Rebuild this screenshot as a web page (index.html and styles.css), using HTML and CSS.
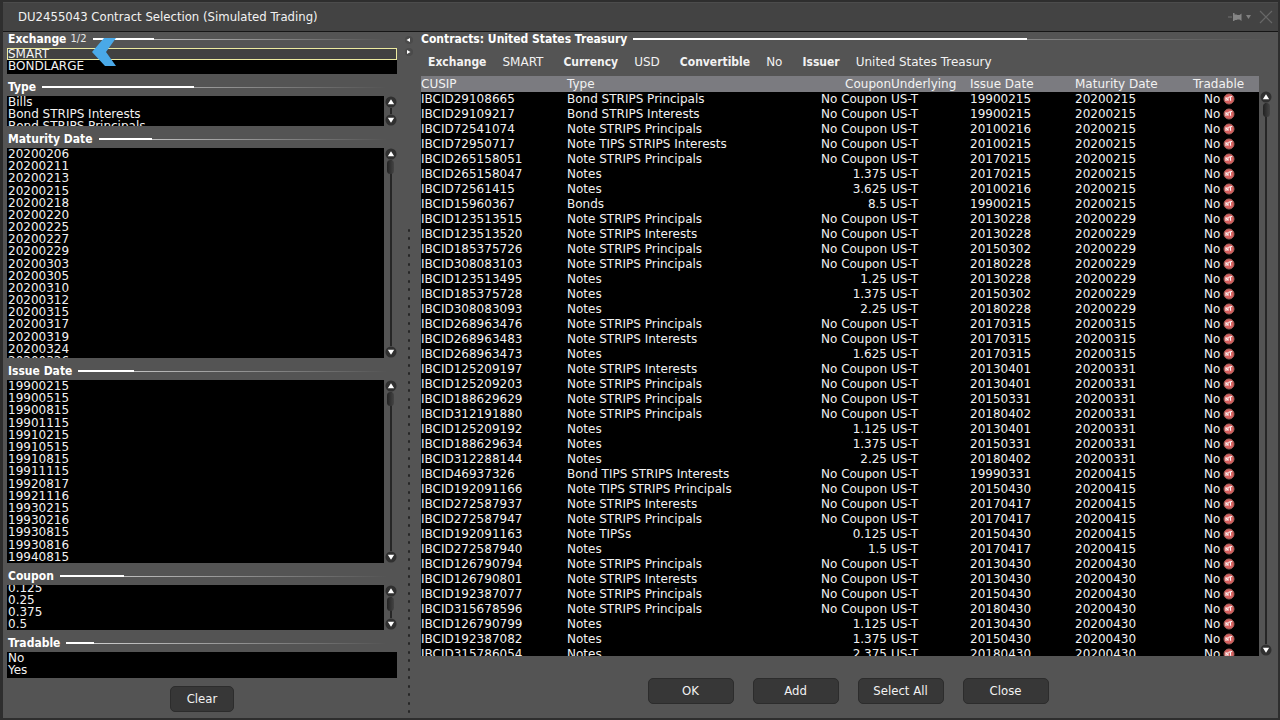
FILE: index.html
```html
<!DOCTYPE html>
<html lang="en">
<head>
<meta charset="utf-8">
<title>DU2455043 Contract Selection (Simulated Trading)</title>
<link rel="stylesheet" href="styles.css">
</head>
<body>
<svg class="defs" aria-hidden="true">
  <symbol id="up" viewBox="0 0 12 12"><circle cx="6" cy="6" r="5.5" fill="#303030"/><path d="M6 3.2 9.2 8.2H2.8z" fill="#fff"/></symbol>
  <symbol id="down" viewBox="0 0 12 12"><circle cx="6" cy="6" r="5.5" fill="#303030"/><path d="M6 8.8 9.2 3.8H2.8z" fill="#fff"/></symbol>
  <symbol id="nt" viewBox="0 0 12 12"><circle cx="6" cy="6" r="5" fill="#d9605f" stroke="#a8605c"/><path d="M3 8V4.500l2 3V4M5.500 4.200l3.700-.7M7.300 4l.4 3.800" fill="none" stroke="#fff" stroke-width="1"/></symbol>
</svg>
<div class="window">
  <header class="titlebar">
    <h1 class="title">DU2455043 Contract Selection (Simulated Trading)</h1>
    <button class="plain" aria-label="Pin"><svg width="26" height="16" viewBox="0 0 26 16"><path d="M0 8h4" stroke="#737373"/><path d="M5 4h1.500v1.500h2l1 .5h2l2-1.500V12l-2-1.500h-2l-1 .5h-2v1H5z" fill="#858585"/><path d="M18 6h5l-2.500 4z" fill="#808080"/></svg></button>
    <button class="plain" aria-label="Close window"><svg width="16" height="16" viewBox="0 0 16 16"><path d="m2 2 12 12M14 2 2 14" stroke="#686868" stroke-width="1.200"/></svg></button>
  </header>
  <div class="content">
    <aside class="filters">
      <h2 class="section first">Exchange <small>1/2</small><i class="rule r-exchange"></i></h2>
      <div class="list-row h-exchange">
        <div class="box"><ul><li class="selected">SMART</li><li>BONDLARGE</li></ul></div>
        <svg class="pointer" viewBox="0 0 24 28" aria-hidden="true"><path d="M0 14 12 0h12L14 14l10 14H13z" fill="#4aa9e8"/></svg>
      </div>
      <h2 class="section">Type<i class="rule r-type"></i></h2>
      <div class="list-row h-type">
        <div class="box"><ul><li>Bills</li><li>Bond STRIPS Interests</li><li>Bond STRIPS Principals</li></ul></div>
        <div class="scroll"><button class="plain" aria-label="Up"><svg><use href="#up"/></svg></button><span class="track"></span><button class="plain" aria-label="Down"><svg><use href="#down"/></svg></button></div>
      </div>
      <h2 class="section">Maturity Date<i class="rule r-maturity"></i></h2>
      <div class="list-row grow-maturity">
        <div class="box"><ul class="spread over">
          <li>20200206</li><li>20200211</li><li>20200213</li><li>20200215</li><li>20200218</li><li>20200220</li><li>20200225</li><li>20200227</li><li>20200229</li><li>20200303</li><li>20200305</li><li>20200310</li><li>20200312</li><li>20200315</li><li>20200317</li><li>20200319</li><li>20200324</li><li>20200326</li></ul></div>
        <div class="scroll"><button class="plain" aria-label="Up"><svg><use href="#up"/></svg></button><span class="track"><b class="thumb"></b></span><button class="plain" aria-label="Down"><svg><use href="#down"/></svg></button></div>
      </div>
      <h2 class="section">Issue Date<i class="rule r-issue"></i></h2>
      <div class="list-row grow-issue">
        <div class="box"><ul class="spread">
          <li>19900215</li><li>19900515</li><li>19900815</li><li>19901115</li><li>19910215</li><li>19910515</li><li>19910815</li><li>19911115</li><li>19920817</li><li>19921116</li><li>19930215</li><li>19930216</li><li>19930815</li><li>19930816</li><li>19940815</li></ul></div>
        <div class="scroll"><button class="plain" aria-label="Up"><svg><use href="#up"/></svg></button><span class="track"><b class="thumb"></b></span><button class="plain" aria-label="Down"><svg><use href="#down"/></svg></button></div>
      </div>
      <h2 class="section">Coupon<i class="rule r-coupon"></i></h2>
      <div class="list-row h-coupon">
        <div class="box end"><ul><li>0.125</li><li>0.25</li><li>0.375</li><li>0.5</li></ul></div>
        <div class="scroll"><button class="plain" aria-label="Up"><svg><use href="#up"/></svg></button><span class="track"><b class="thumb"></b></span><button class="plain" aria-label="Down"><svg><use href="#down"/></svg></button></div>
      </div>
      <h2 class="section">Tradable<i class="rule r-tradable"></i></h2>
      <div class="list-row h-tradable"><div class="box"><ul><li>No</li><li>Yes</li></ul></div></div>
      <div class="clear-row"><button class="btn small">Clear</button></div>
    </aside>
    <div class="splitter">
      <button class="plain" aria-label="Collapse left"><svg width="10" height="10" viewBox="0 0 10 10"><circle cx="5" cy="5" r="4" fill="#4a4a4a"/><path d="M2.500 5l3.500-2v4z" fill="#fff"/></svg></button>
      <button class="plain" aria-label="Collapse right"><svg width="10" height="10" viewBox="0 0 10 10"><circle cx="5" cy="5" r="4" fill="#4a4a4a"/><path d="M6.500 5 3 3v4z" fill="#fff"/></svg></button>
      <div class="dots" id="dots"></div>
    </div>
    <main class="contracts">
      <h2 class="section first">Contracts: United States Treasury<i class="rule r-contracts"></i></h2>
      <dl class="facts">
        <div><dt>Exchange</dt><dd>SMART</dd></div>
        <div><dt>Currency</dt><dd>USD</dd></div>
        <div><dt>Convertible</dt><dd>No</dd></div>
        <div><dt>Issuer</dt><dd>United States Treasury</dd></div>
      </dl>
      <div class="grid">
        <div class="viewport">
          <table>
            <colgroup><col class="c-cusip"><col class="c-type"><col class="c-coupon"><col class="c-under"><col class="c-issue"><col class="c-maturity"><col></colgroup>
            <thead><tr><th>CUSIP</th><th>Type</th><th class="num">Coupon</th><th>Underlying</th><th>Issue Date</th><th>Maturity Date</th><th class="trade">Tradable</th></tr></thead>
            <tbody id="rows"></tbody>
          </table>
        </div>
        <div class="scroll"><button class="plain" aria-label="Up"><svg><use href="#up"/></svg></button><span class="track"><b class="thumb"></b></span><button class="plain" aria-label="Down"><svg><use href="#down"/></svg></button></div>
      </div>
      <footer class="actions">
        <button class="btn">OK</button><button class="btn">Add</button><button class="btn">Select All</button><button class="btn">Close</button>
      </footer>
    </main>
  </div>
</div>
<script src="app.js"></script>
</body>
</html>
```
FILE: styles.css
```css
* { box-sizing: border-box; }
body {
  margin: 0;
  height: 100vh;
  background: #2e2e2e;
  color: #f2f2f2;
  font: 12px/12px "DejaVu Sans", Verdana, sans-serif;
}
.defs { position: absolute; width: 0; height: 0; }
h1, h2, ul, dl, dd { margin: 0; padding: 0; }
ul { list-style: none; }
.plain { display: block; padding: 0; border: 0; background: none; line-height: 0; }
.window {
  display: flex;
  flex-direction: column;
  height: 100%;
  padding: 2px 2px 2px 3px;
}
.titlebar {
  display: flex;
  align-items: center;
  gap: 4px;
  height: 30px;
  flex: none;
  padding: 0 4px 0 15px;
  background: #434343;
  border-top: 1px solid #4c4c4c;
  border-bottom: 1px solid #161616;
}
.title {
  flex: 1;
  font: 13px/18px "DejaVu Sans Condensed", "DejaVu Sans", sans-serif;
}
.content {
  flex: 1;
  display: flex;
  min-height: 0;
  background: #545454;
}
.filters {
  display: flex;
  flex-direction: column;
  flex: 0 0 394px;
  padding-left: 4px;
}
.section {
  display: flex;
  align-items: center;
  gap: 6px;
  flex: none;
  height: 22px;
  padding-top: 3px;
  padding-left: 1px;
  font: bold 12px/16px "DejaVu Sans Condensed", "DejaVu Sans", sans-serif;
  color: #fff;
}
.section.first { height: 14px; margin-bottom: 2px; padding-top: 0; }
.section small { font: 10px/14px "DejaVu Sans", sans-serif; color: #e8e8e8; margin-left: -2px; }
.rule {
  flex: 1;
  height: 2px;
  margin-right: 10px;
  background:
    linear-gradient(#fff, #fff) left top / var(--lead) 2px no-repeat,
    linear-gradient(90deg, #d8d8d8, #545454) left bottom / 100% 1px no-repeat;
}
.r-exchange { --lead: 61px; }
.r-type { --lead: 152px; }
.r-maturity { --lead: 53px; }
.r-issue { --lead: 56px; }
.r-coupon { --lead: 64px; }
.r-tradable { --lead: 28px; }
.r-contracts { --lead: 394px; margin-right: 0; }
.list-row { position: relative; display: flex; flex: none; min-height: 0; }
.h-exchange { height: 26px; }
.h-type { height: 30px; }
.h-coupon { height: 45px; }
.h-tradable { height: 26px; }
.grow-maturity { flex: 210 1 0; }
.grow-issue { flex: 183 1 0; }
.box { flex: 1; min-width: 0; background: #000; overflow: hidden; }
.box li { padding-left: 1px; white-space: nowrap; }
.box li.selected { padding-left: 0; background: #414141; border: 1px solid #eceaa0; line-height: 10px; }
.spread { display: grid; grid-auto-rows: 1fr; height: 100%; }
.spread.over { height: calc(100% + 9px); }
.box.end { display: flex; align-items: flex-end; }
.pointer { position: absolute; left: 85px; top: -10px; width: 24px; height: 28px; }
.scroll {
  display: flex;
  flex-direction: column;
  align-items: center;
  flex: none;
  width: 13px;
}
.scroll svg { display: block; width: 12px; height: 12px; }
.track { flex: 1; width: 2px; display: flex; justify-content: center; background: #262626; }
.thumb { flex: none; width: 7px; height: 14px; border-radius: 4px; background: linear-gradient(90deg, #222, #444); }
.clear-row { flex: none; height: 40px; display: flex; justify-content: center; align-items: flex-start; padding-top: 8px; }
.splitter { flex: none; width: 24px; padding-top: 2px; display: flex; flex-direction: column; align-items: center; }
.splitter .plain { height: 12px; }
.dots { flex: 1; display: flex; flex-direction: column; justify-content: space-between; margin: 171px 0 5px; }
.dots i { width: 2px; height: 3px; border-radius: 1px; background: #262626; }
.contracts { flex: 1; min-width: 0; display: flex; flex-direction: column; padding-right: 5px; }
.contracts .section { padding-left: 0; }
.contracts > * { flex: none; }
.facts { display: flex; gap: 20px; padding: 5px 0 0 7px; height: 28px; line-height: 18px; }
.facts div { display: flex; gap: 16px; }
dt { font-weight: bold; font-family: "DejaVu Sans Condensed", "DejaVu Sans", sans-serif; }
.contracts > .grid { flex: 1; display: flex; min-height: 0; }
.grid .scroll { padding-top: 15px; width: 14px; }
.viewport { flex: 1; overflow: hidden; background: #000; }
table { width: 100%; table-layout: fixed; border-collapse: collapse; line-height: 15px; }
th, td { padding: 0; height: 15px; text-align: left; font-weight: normal; white-space: nowrap; }
thead tr { background: #7b7b80; }
th { padding-top: 1px; }
th.num, td.num { text-align: right; }
td.num { padding-right: 4px; }
.c-cusip { width: 146px; }
.c-type { width: 254px; }
.c-coupon { width: 70px; }
.c-under { width: 79px; }
.c-issue { width: 105px; }
.c-maturity { width: 118px; }
td.trade { padding-left: 11px; }
td.trade svg { width: 12px; height: 12px; margin-left: 3px; vertical-align: -2px; }
.actions { display: flex; justify-content: center; gap: 19px; height: 62px; padding: 22px 0 0 2px; }
.btn {
  width: 86px;
  height: 26px;
  padding: 0;
  border: 1px solid #2c2c2c;
  border-radius: 5px;
  background: #373737;
  color: #f2f2f2;
  font: 13px/18px "DejaVu Sans Condensed", "DejaVu Sans", sans-serif;
}
.btn.small { width: 64px; }
```
FILE: app.js
```js
const kinds = {
  BP: "Bond STRIPS Principals", BI: "Bond STRIPS Interests",
  NP: "Note STRIPS Principals", NI: "Note STRIPS Interests",
  TI: "Note TIPS STRIPS Interests", TP: "Note TIPS STRIPS Principals",
  BT: "Bond TIPS STRIPS Interests", NT: "Note TIPSs", N: "Notes", B: "Bonds"
};
// id, kind, coupon ("-" for none), issue date, maturity date
const contracts = `29108665 BP - 19900215 20200215
29109217 BI - 19900215 20200215
72541074 NP - 20100216 20200215
72950717 TI - 20100215 20200215
265158051 NP - 20170215 20200215
265158047 N 1.375 20170215 20200215
72561415 N 3.625 20100216 20200215
15960367 B 8.5 19900215 20200215
123513515 NP - 20130228 20200229
123513520 NI - 20130228 20200229
185375726 NP - 20150302 20200229
308083103 NP - 20180228 20200229
123513495 N 1.25 20130228 20200229
185375728 N 1.375 20150302 20200229
308083093 N 2.25 20180228 20200229
268963476 NP - 20170315 20200315
268963483 NI - 20170315 20200315
268963473 N 1.625 20170315 20200315
125209197 NI - 20130401 20200331
125209203 NP - 20130401 20200331
188629629 NP - 20150331 20200331
312191880 NP - 20180402 20200331
125209192 N 1.125 20130401 20200331
188629634 N 1.375 20150331 20200331
312288144 N 2.25 20180402 20200331
46937326 BT - 19990331 20200415
192091166 TP - 20150430 20200415
272587937 NI - 20170417 20200415
272587947 NP - 20170417 20200415
192091163 NT 0.125 20150430 20200415
272587940 N 1.5 20170417 20200415
126790794 NP - 20130430 20200430
126790801 NI - 20130430 20200430
192387077 NP - 20150430 20200430
315678596 NP - 20180430 20200430
126790799 N 1.125 20130430 20200430
192387082 N 1.375 20150430 20200430
315786054 N 2.375 20180430 20200430`;

document.getElementById("rows").innerHTML = contracts.split("\n").map(line => {
  const [id, kind, coupon, issue, maturity] = line.split(" ");
  return `<tr><td>IBCID${id}</td><td>${kinds[kind]}</td><td class="num">${coupon === "-" ? "No Coupon" : coupon}</td><td>US-T</td><td>${issue}</td><td>${maturity}</td><td class="trade">No<svg aria-hidden="true"><use href="#nt"/></svg></td></tr>`;
}).join("");
document.getElementById("dots").innerHTML = "<i></i>".repeat(58);
```
